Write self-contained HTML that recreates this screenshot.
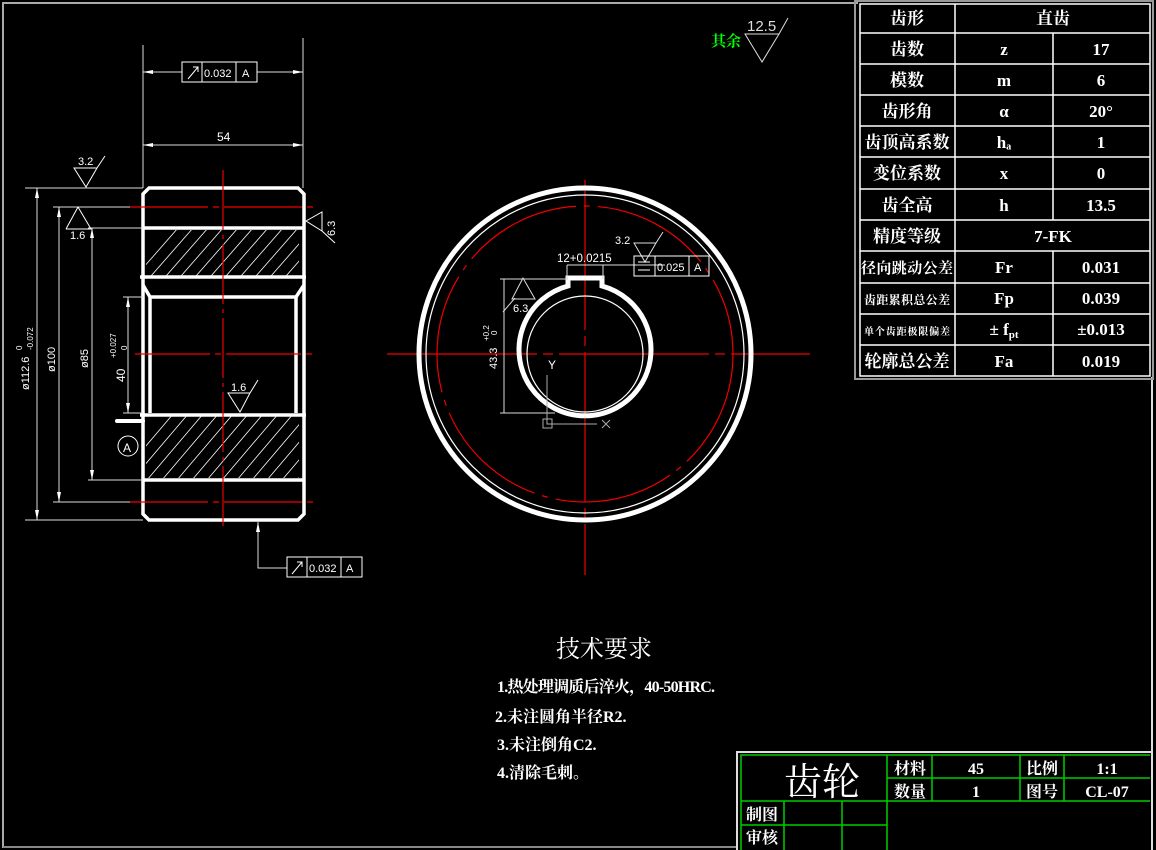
<!DOCTYPE html>
<html><head><meta charset="utf-8"><style>
html,body{margin:0;padding:0;background:#000;width:1156px;height:850px;overflow:hidden}
svg{display:block}
text{font-family:"Liberation Sans","Noto Sans CJK SC",sans-serif;fill:#fff}
.c{font-family:"Liberation Serif","Noto Serif CJK SC","Noto Sans CJK SC",serif;font-weight:bold}
</style></head><body>
<svg width="1156" height="850" viewBox="0 0 1156 850">
<!-- frame -->
<path d="M3 848 V3 H858" stroke="#aaa" stroke-width="2" fill="none"/>
<path d="M3 847 H738" stroke="#888" stroke-width="2"/>
<path d="M1152 377 V850" stroke="#ddd" stroke-width="2"/>

<!-- LEFT VIEW -->
<g stroke="#fff" fill="none">
 <!-- hatch -->
 <clipPath id="h1"><rect x="146" y="230" width="153" height="46"/></clipPath>
 <clipPath id="h2"><rect x="146" y="416" width="153" height="62"/></clipPath>
 <g stroke-width="0.8" clip-path="url(#h1)">
  <path d="M130 300 L200 220 M145 300 L215 220 M160 300 L230 220 M175 300 L245 220 M190 300 L260 220 M205 300 L275 220 M220 300 L290 220 M235 300 L305 220 M250 300 L320 220 M265 300 L335 220 M280 300 L350 220 M115 300 L185 220"/>
 </g>
 <g stroke-width="0.8" clip-path="url(#h2)">
  <path d="M100 500 L185 400 M115 500 L200 400 M130 500 L215 400 M145 500 L230 400 M160 500 L245 400 M175 500 L260 400 M190 500 L275 400 M205 500 L290 400 M220 500 L305 400 M235 500 L320 400 M250 500 L335 400 M265 500 L350 400 M280 500 L365 400"/>
 </g>
 <g stroke-width="3.5">
  <path d="M149 188 H298 L304 194 V514 L298 520 H149 L143 514 V194 Z"/>
  <path d="M143 228 H304 M140 277 H306 M143 480 H304 M140 415 H306"/>
  <path d="M143 285 L150 297 H296 L304 285"/>
  <path d="M150 297 V413 M296 297 V413"/>
  <path d="M117 421 H143" stroke-width="4" stroke-linecap="round"/>
 </g>
 <circle cx="128" cy="446" r="10" stroke-width="1"/>
 <!-- dims -->
 <g stroke-width="1" stroke="#ddd">
  <path d="M143 45 V188 M303 38 V188"/>
  <path d="M143 72 H182 M257 72 H303"/>
  <path d="M143 145 H303"/>
  <path d="M25 188 H143 M53 207 H143 M88 228 H143 M123 297 H143 M123 413 H143 M88 480 H143 M53 502 H143 M25 520 H143"/>
  <path d="M37 188 V520 M59 207 V502 M92 228 V480 M128 297 V413"/>
  <path d="M258 522 V568 H287"/>
 </g>
 <rect x="182" y="62" width="75" height="20" stroke-width="1"/>
 <path d="M202 62 V82 M236 62 V82 M188 79 L198 67 M193 67 H198 V72" stroke-width="1"/>
 <rect x="287" y="557" width="75" height="20" stroke-width="1"/>
 <path d="M307 557 V577 M341 557 V577 M292 574 L302 562 M297 562 H302 V567" stroke-width="1"/>
 <!-- roughness -->
 <path d="M74 168 H97 L86 187 Z M97 168 L105 156" stroke-width="1"/>
 <path d="M78 207 L66 229 M78 207 L91 229 H66" stroke-width="1"/>
 <path d="M306 221 L322 212 V231 Z M322 231 L335 243" stroke-width="1"/>
 <path d="M228 393 H250 L240 412 Z M250 393 L258 380" stroke-width="1"/>
</g>
<g fill="#fff" stroke="none">
 <path d="M143 145 l10 -2 v4 z M303 145 l-10 -2 v4 z M143 72 l10 -2 v4z M303 72 l-10 -2 v4z M37 188 l-2 10 h4z M37 520 l-2 -10 h4z M59 207 l-2 10 h4z M59 502 l-2 -10 h4z M92 228 l-2 10 h4z M92 480 l-2 -10 h4z M128 297 l-2 10 h4z M128 413 l-2 -10 h4z M258 522 l-2 10 h4z"/>
</g>
<g font-size="12">
 <text x="217" y="141">54</text>
 <text x="204" y="77" font-size="11">0.032</text><text x="242" y="77" font-size="11">A</text>
 <text x="309" y="572" font-size="11">0.032</text><text x="346" y="572" font-size="11">A</text>
 <text x="78" y="165" font-size="11">3.2</text>
 <text x="70" y="239" font-size="11">1.6</text>
 <text x="231" y="391" font-size="11">1.6</text>
 <text transform="translate(335 236) rotate(-90)" font-size="11">6.3</text>
 <text x="123" y="452" font-size="12">A</text>
 <text transform="translate(29 390) rotate(-90)" font-size="11">ø112.6</text>
 <text transform="translate(22 350) rotate(-90)" font-size="8">0</text>
 <text transform="translate(33 350) rotate(-90)" font-size="8">-0.072</text>
 <text transform="translate(55 372) rotate(-90)" font-size="11">ø100</text>
 <text transform="translate(88 368) rotate(-90)" font-size="11">ø85</text>
 <text transform="translate(125 382) rotate(-90)" font-size="12">40</text>
 <text transform="translate(116 358) rotate(-90)" font-size="8">+0.027</text>
 <text transform="translate(127 350) rotate(-90)" font-size="8">0</text>
</g>
<!-- red centerlines left -->
<g stroke="#e00" stroke-width="1.2">
 <path d="M223 170 V530" stroke-dasharray="60 5 4 5"/>
 <path d="M130 207 H315 M130 502 H315" stroke-dasharray="78 5 6 5"/>
 <path d="M135 354 H315" stroke-dasharray="75 5 6 5"/>
</g>

<!-- RIGHT VIEW -->
<g stroke="#e00" stroke-width="1.2" fill="none">
 <path d="M387 354 H810" stroke-dasharray="150 6 10 6"/>
 <path d="M585 180 V575" stroke-dasharray="150 6 10 6"/>
 <circle cx="585" cy="354" r="148" stroke-dasharray="120 8 6 8"/>
</g>
<g stroke="#fff" fill="none">
 <circle cx="585" cy="354" r="166" stroke-width="5"/>
 <circle cx="585" cy="354" r="159" stroke-width="1.2"/>
 <path d="M568 286 A66 66 0 1 0 602 286 V278 H568 Z" stroke-width="5"/>
 <circle cx="585" cy="354" r="58" stroke-width="1.2"/>
 <g stroke-width="1" stroke="#ddd">
  <path d="M500 279 H568 M500 413 H555 M504 279 V413"/>
  <path d="M567 265 V279 M603 265 V279 M567 265 H665"/>
  <path d="M515 298 L503 312 M523 278 L512 299 H535 Z"/>
  <path d="M634 243 H656 L645 262 Z M656 243 L663 232"/>
  <path d="M547 375 V424 H597 M602 420 L610 428 M610 420 L602 428" stroke="#aaa"/>
 </g>
 <rect x="543" y="419" width="9" height="9" stroke="#aaa" stroke-width="1"/>
 <rect x="634" y="256" width="75" height="20" stroke-width="1"/>
 <path d="M655 256 V276 M689 256 V276 M638 262 H650 M638 270 H650" stroke-width="1"/>
</g>
<g font-size="12">
 <text x="557" y="262" font-size="11.5">12+0.0215</text>
 <text x="615" y="244" font-size="11">3.2</text>
 <text x="513" y="312" font-size="11">6.3</text>
 <text x="657" y="271" font-size="11">0.025</text><text x="694" y="271" font-size="11">A</text>
 <text transform="translate(497 369) rotate(-90)" font-size="11">43.3</text>
 <text transform="translate(489 341) rotate(-90)" font-size="8">+0.2</text>
 <text transform="translate(497 335) rotate(-90)" font-size="8">0</text>
 <text x="548" y="369" font-size="12" fill="#ccc">Y</text>
</g>

<!-- 其余 12.5 -->
<text x="711" y="46" font-size="15" class="c" style="fill:#0f0">其余</text>
<text x="747" y="31" font-size="15" fill="#ddd" style="fill:#ddd">12.5</text>
<path d="M745 34 H779 L762 62 Z M779 34 L788 18" stroke="#ddd" stroke-width="1" fill="none"/>

<!-- PARAM TABLE -->
<rect x="855" y="1" width="298" height="378" fill="none" stroke="#999" stroke-width="2"/>
<g stroke="#fff" stroke-width="1.5" fill="none">
 <rect x="860" y="4" width="290" height="372"/>
 <path d="M860 33 H1150 M860 64 H1150 M860 95 H1150 M860 126 H1150 M860 157 H1150 M860 189 H1150 M860 220 H1150 M860 251 H1150 M860 283 H1150 M860 314 H1150 M860 345 H1150"/>
 <path d="M955 4 V376 M1053 33 V220 M1053 251 V376"/>
</g>
<g class="c" font-size="17" text-anchor="middle">
 <text x="907" y="24" class="c">齿形</text><text x="1053" y="24" class="c">直齿</text>
 <text x="907" y="55" class="c">齿数</text><text x="1004" y="55" class="c">z</text><text x="1101" y="55" class="c">17</text>
 <text x="907" y="86" class="c">模数</text><text x="1004" y="86" class="c">m</text><text x="1101" y="86" class="c">6</text>
 <text x="907" y="117" class="c">齿形角</text><text x="1004" y="117" class="c">α</text><text x="1101" y="117" class="c">20°</text>
 <text x="907" y="148" class="c">齿顶高系数</text><text x="1004" y="148" class="c">hₐ</text><text x="1101" y="148" class="c">1</text>
 <text x="907" y="179" class="c">变位系数</text><text x="1004" y="179" class="c">x</text><text x="1101" y="179" class="c">0</text>
 <text x="907" y="211" class="c">齿全高</text><text x="1004" y="211" class="c">h</text><text x="1101" y="211" class="c">13.5</text>
 <text x="907" y="242" class="c">精度等级</text><text x="1053" y="242" class="c">7-FK</text>
 <text x="907" y="273" class="c" font-size="15" textLength="92">径向跳动公差</text><text x="1004" y="273" class="c">Fr</text><text x="1101" y="273" class="c">0.031</text>
 <text x="907" y="304" class="c" font-size="12" textLength="86">齿距累积总公差</text><text x="1004" y="304" class="c">Fp</text><text x="1101" y="304" class="c">0.039</text>
 <text x="907" y="335" class="c" font-size="10" textLength="86">单个齿距极限偏差</text><text x="1004" y="335" class="c">± f<tspan font-size="11" dy="3">pt</tspan></text><text x="1101" y="335" class="c">±0.013</text>
 <text x="907" y="367" class="c">轮廓总公差</text><text x="1004" y="367" class="c">Fa</text><text x="1101" y="367" class="c">0.019</text>
</g>

<!-- TECH REQUIREMENTS -->
<text x="556" y="657" font-size="24" class="c" style="font-weight:normal">技术要求</text>
<g class="c" font-size="16">
 <text x="497" y="692" class="c" textLength="218">1.热处理调质后淬火，40-50HRC.</text>
 <text x="495" y="722" class="c">2.未注圆角半径R2.</text>
 <text x="497" y="750" class="c">3.未注倒角C2.</text>
 <text x="497" y="778" class="c">4.清除毛刺。</text>
</g>

<!-- TITLE BLOCK -->
<path d="M737 850 V752 H1152" stroke="#ddd" stroke-width="2" fill="none"/>
<g stroke="#0c0" stroke-width="1.5" fill="none">
 <path d="M741 850 V755 H1150"/>
 <path d="M741 801 H1150 M887 778 H1150 M741 825 H887"/>
 <path d="M887 755 V850 M932 755 V801 M1020 755 V801 M1064 755 V801 M784 801 V850 M842 801 V850"/>
</g>
<text x="784" y="795" font-size="38" class="c" style="font-weight:normal">齿轮</text>
<g class="c" font-size="16" text-anchor="middle">
 <text x="910" y="774" class="c">材料</text><text x="976" y="774" class="c">45</text>
 <text x="1042" y="774" class="c">比例</text><text x="1107" y="774" class="c">1:1</text>
 <text x="910" y="797" class="c">数量</text><text x="976" y="797" class="c">1</text>
 <text x="1042" y="797" class="c">图号</text><text x="1107" y="797" class="c">CL-07</text>
 <text x="762" y="820" class="c">制图</text>
 <text x="762" y="843" class="c">审核</text>
</g>
</svg>
</body></html>
